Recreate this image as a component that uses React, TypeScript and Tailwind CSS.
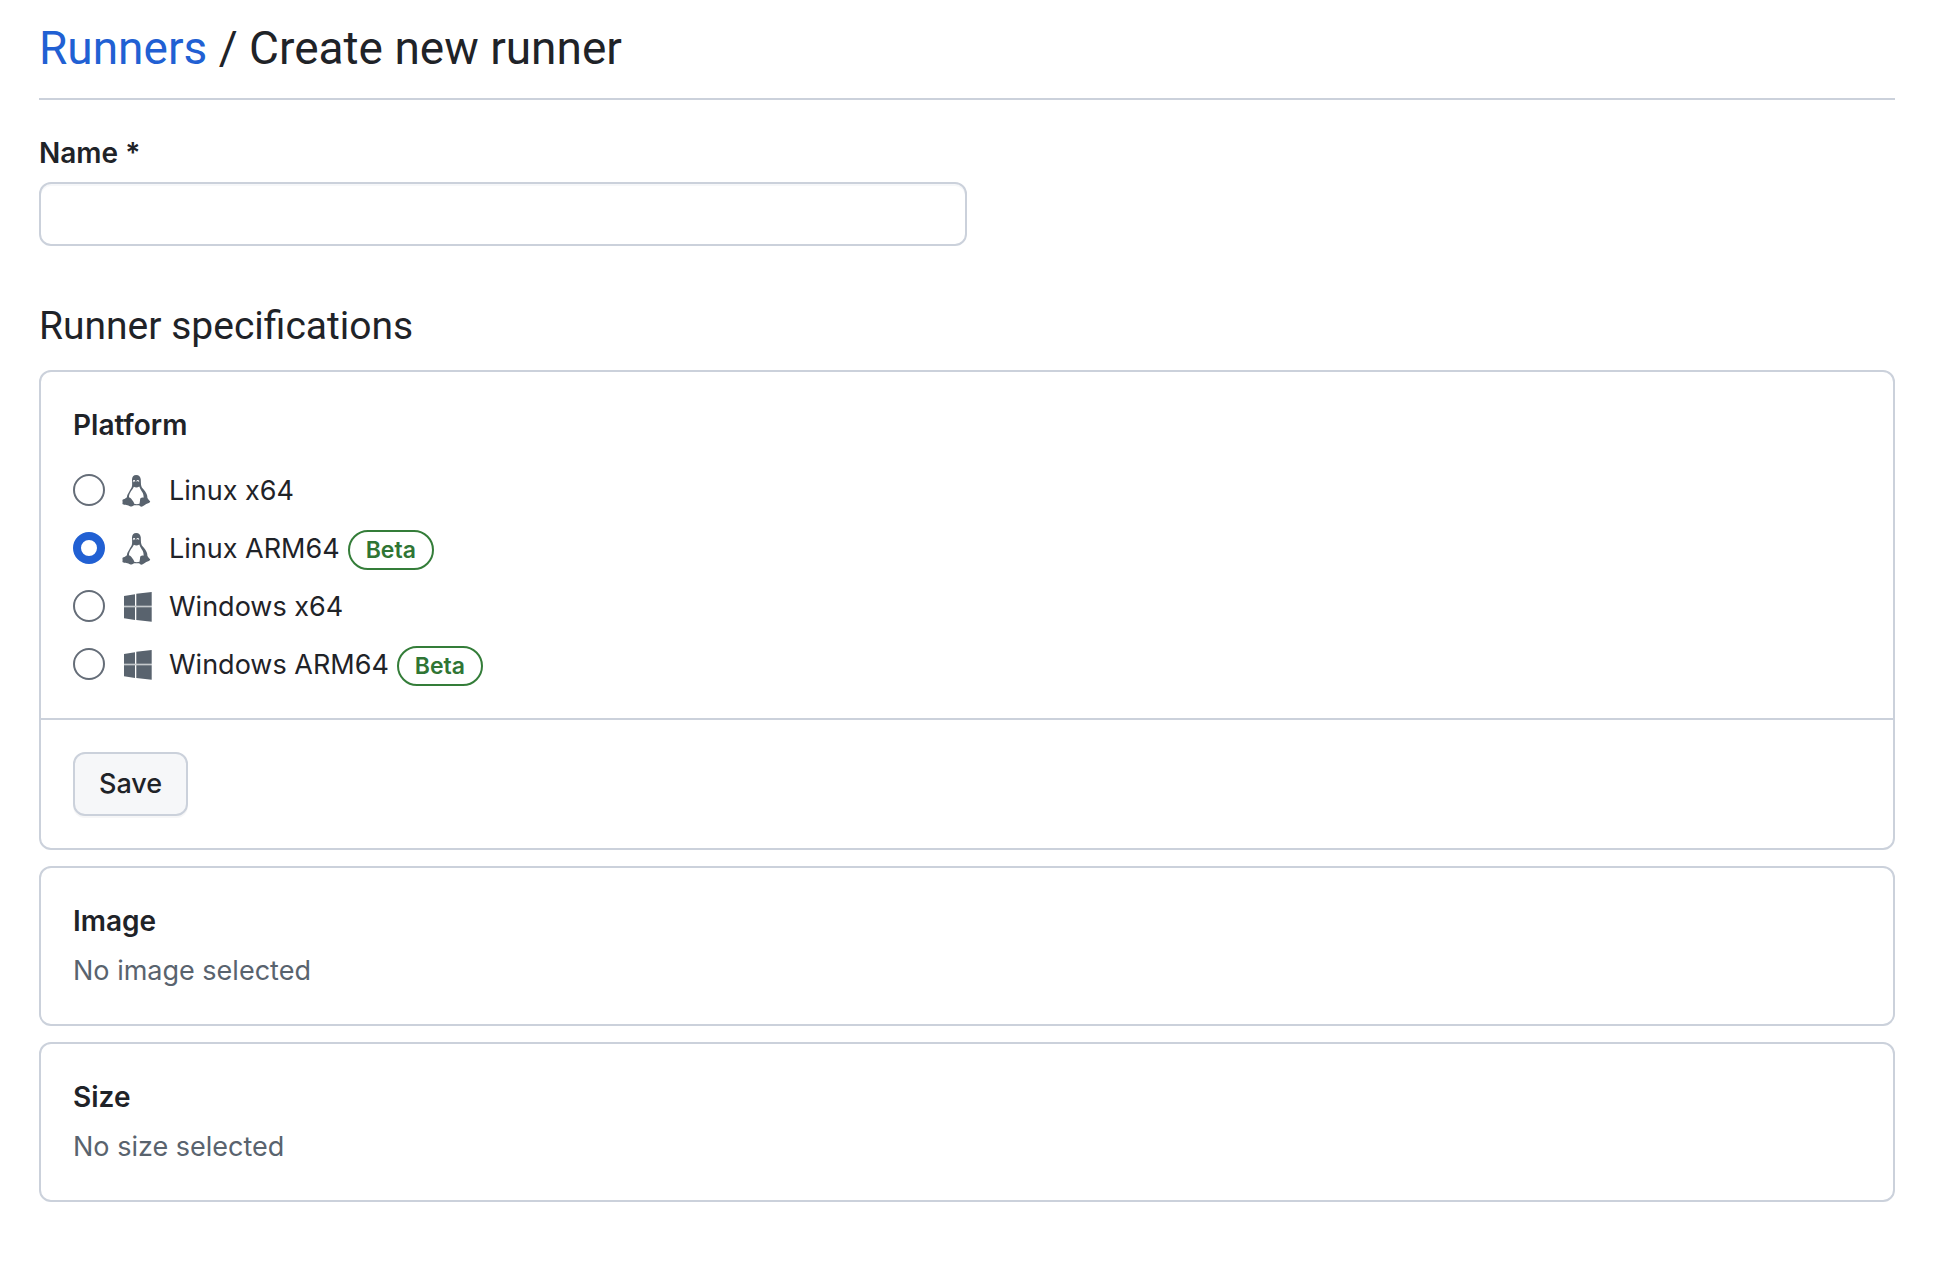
import { useState } from "react";

type IconProps = { className?: string };

function TuxIcon({ className }: IconProps) {
    return (
        <svg viewBox="0 0 32 33" className={className} fill="currentColor" aria-hidden="true">
            <path
                fillRule="evenodd"
                d="M15.2 1C12.5 1 11 2.9 11 5.6 11 8 11.3 10 11 12 10.7 14 9.3 15.4 8.3 17.5 7.2 19.600 6 21 5.800 23.600 4.800 23.800 4.600 24.700 3.500 24.900 1.800 25.100 1.200 25.600 1.500 27.200 1.800 28.400 1.300 29.200 1.500 30.100 2 31 6.300 31 8.300 31.900 10.200 32.800 12 32.600 13 31.300H18.200C19.300 33.200 21.400 33 23 31.600 24.500 30 26 29.500 27.800 28.900 29.600 28.100 29.500 27.300 28.300 26.400 27.300 25.600 27.500 24.800 26.400 23.900 26.500 21.300 25.400 19.300 24 17.300 22.500 15.200 20.800 14 20.300 12 19.800 10 19.900 8 19.800 5.600 19.600 2.700 18 1 15.200 1ZM13 6C13.900 6 14.300 6.700 14.300 7.600L13.600 7.900C13.600 7.300 13.400 7 13 7 12.600 7 12.500 7.400 12.600 7.900L12 8.200C11.700 7.100 12.100 6 13 6ZM16.700 5.900C17.700 5.900 18.300 6.700 18.100 7.900L17.400 7.700C17.500 7.200 17.200 6.800 16.800 6.800 16.400 6.800 16.100 7.200 16.200 7.700L15.500 7.500C15.400 6.600 15.900 5.900 16.700 5.900ZM12.900 12.800C14.600 13.800 16.500 13.700 18.300 12.400 19.300 15.300 20.900 17 21.800 19.100 22.400 20.600 22.800 22.200 22.500 23.700 20.500 23.300 19.300 24 19.100 25.500 18.900 27 18.800 28.400 18.500 29.700 16.800 30.300 14.700 30.300 13.200 29.800 12.900 28 11.900 26.800 10.600 25.200 9.800 24.200 9 23.500 8 23.500 7.900 21.500 8.400 20.200 9.300 18.500 10.300 16.500 12 15.200 12.900 12.800Z"
            />
        </svg>
    );
}

function WindowsIcon({ className }: IconProps) {
    return (
        <svg viewBox="0 0 32 33" className={className} fill="currentColor" aria-hidden="true">
            <path d="M3 6 14 4.200V15.700H3ZM15.300 3.800 30.700 2V15.700H15.300ZM3 17.300H14V30L3 28.200ZM15.300 17.300H30.700V31.800L15.300 30Z" />
            <path opacity=".35" d="M3 15.700H30.700V17.300H3Z" />
        </svg>
    );
}

const platforms = [
    { id: "linux-x64", label: "Linux x64", Icon: TuxIcon, beta: false },
    { id: "linux-arm64", label: "Linux ARM64", Icon: TuxIcon, beta: true },
    { id: "windows-x64", label: "Windows x64", Icon: WindowsIcon, beta: false },
    { id: "windows-arm64", label: "Windows ARM64", Icon: WindowsIcon, beta: true },
];

function EmptySpec({ title, text }: { title: string; text: string }) {
    return (
        <section className="mt-4 rounded-xl border-2 border-[#cbd1db] p-8">
            <h3 className="text-[28px] leading-[42px] font-semibold">{title}</h3>
            <p className="mt-2 text-[27px] leading-[42px] text-[#59636e]">{text}</p>
        </section>
    );
}

export default function App() {
    const [name, setName] = useState("");
    const [platform, setPlatform] = useState("linux-arm64");

    return (
        <main className="min-h-screen bg-white pt-3 pr-[65px] pb-16 pl-[39px] font-['Inter',sans-serif] text-[#1f2328]">
            {/* Breadcrumb title */}
            <h1 className="border-b-2 border-[#cbd1db] pb-[14px] font-['Roboto',sans-serif] text-[46px] leading-[72px]">
                <a href="#runners" className="text-[#2160d3]">Runners</a> / Create new runner
            </h1>

            <form onSubmit={(e) => e.preventDefault()}>
                <div className="mt-8 flex flex-col">
                    <label htmlFor="runner-name" className="text-[28px] leading-[42px] font-semibold">
                        Name *
                    </label>
                    <input
                        id="runner-name"
                        type="text"
                        value={name}
                        onChange={(e) => setName(e.target.value)}
                        className="mt-2 h-16 w-1/2 rounded-xl border-2 border-[#cbd1db] px-6 text-[27px] shadow-[inset_0_2px_0_#f6f7f9]"
                    />
                </div>

                <h2 className="mt-[50px] mb-[14px] font-['Roboto',sans-serif] text-[39px] leading-[60px]">Runner specifications</h2>

                {/* Platform */}
                <section className="rounded-xl border-2 border-[#cbd1db]">
                    <div role="radiogroup" aria-labelledby="platform-title" className="p-8">
                        <h3 id="platform-title" className="text-[28px] leading-[42px] font-semibold">Platform</h3>
                        <div className="mt-6 flex flex-col gap-4">
                            {platforms.map(({ id, label, Icon, beta }) => (
                                <div key={id} className="flex items-start">
                                    <input
                                        id={id}
                                        type="radio"
                                        name="platform"
                                        checked={platform === id}
                                        onChange={() => setPlatform(id)}
                                        className="mt-1 size-8 appearance-none rounded-full border-2 border-[#656d78] checked:border-8 checked:border-[#2160d3]"
                                    />
                                    <label htmlFor={id} className="flex items-end text-[27px] leading-[42px]">
                                        <Icon className="mx-4 mt-1 h-[33px] w-8 self-start text-[#59636e]" />
                                        {label}
                                        {beta && (
                                            <span className="ml-2 rounded-full border-2 border-[#347d39] px-4 text-[23px] leading-9 font-semibold text-[#2f7534]">
                                                Beta
                                            </span>
                                        )}
                                    </label>
                                </div>
                            ))}
                        </div>
                    </div>
                    <div className="border-t-2 border-[#cbd1db] p-8">
                        <button
                            type="submit"
                            className="block h-16 rounded-xl border-2 border-[#cbd1db] bg-[#f6f7f9] px-6 text-[27px] font-medium shadow-[0_2px_0_#f6f6f7]"
                        >
                            Save
                        </button>
                    </div>
                </section>

                <EmptySpec title="Image" text="No image selected" />
                <EmptySpec title="Size" text="No size selected" />
            </form>
        </main>
    );
}
